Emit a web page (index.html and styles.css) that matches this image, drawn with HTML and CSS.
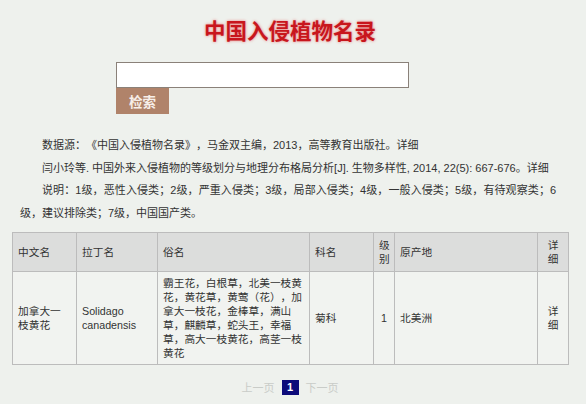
FILE: index.html
```html
<!DOCTYPE html>
<html lang="zh-CN">
<head>
    <meta charset="UTF-8">
    <meta name="viewport" content="width=device-width, initial-scale=1.0">
    <title>中国入侵植物名录</title>
    <link rel="stylesheet" href="styles.css">
</head>
<body>
    <div class="page">
        <h1 class="title">中国入侵植物名录</h1>
        <form class="search">
            <input type="text" class="search-input" name="q">
            <button type="button" class="search-btn">检索</button>
        </form>

        <div class="notes">
            <p>数据源：《中国入侵植物名录》，马金双主编，2013，高等教育出版社。详细</p>
            <p>闫小玲等. 中国外来入侵植物的等级划分与地理分布格局分析[J]. 生物多样性, 2014, 22(5): 667-676。详细</p>
            <p>说明：1级，恶性入侵类；2级，严重入侵类；3级，局部入侵类；4级，一般入侵类；5级，有待观察类；6级，建议排除类；7级，中国国产类。</p>
        </div>

        <table class="plants">
            <colgroup>
                <col style="width: 64px">
                <col style="width: 81px">
                <col style="width: 152px">
                <col style="width: 64px">
                <col style="width: 21px">
                <col style="width: 143px">
                <col style="width: 31px">
            </colgroup>
            <thead>
                <tr>
                    <th>中文名</th>
                    <th>拉丁名</th>
                    <th>俗名</th>
                    <th>科名</th>
                    <th class="center">级别</th>
                    <th>原产地</th>
                    <th class="center">详细</th>
                </tr>
            </thead>
            <tbody>
                <tr>
                    <td>加拿大一枝黄花</td>
                    <td>Solidago canadensis</td>
                    <td>霸王花，白根草，北美一枝黄花，黄花草，黄莺（花），加拿大一枝花，金棒草，满山草，麒麟草，蛇头王，幸福草，高大一枝黄花，高茎一枝黄花</td>
                    <td>菊科</td>
                    <td class="center">1</td>
                    <td>北美洲</td>
                    <td class="center">详细</td>
                </tr>
            </tbody>
        </table>

        <div class="pager">
            <span class="pager-link">上一页</span>
            <span class="pager-current">1</span>
            <span class="pager-link">下一页</span>
        </div>
    </div>
</body>
</html>
```

FILE: styles.css
```css
body {
    margin: 0;
    background-color: #eef1ed;
    font-family: 'Liberation Sans', 'Noto Sans CJK SC', sans-serif;
    color: #333;
    text-spacing-trim: space-all;
}
.page {
    padding: 0 18px 0 12px;
}
.title {
    margin: 18px 0 0;
    font-size: 21.5px;
    line-height: 28px;
    text-align: center;
    color: #c8161d;
    text-shadow: 0 0 3px rgba(230, 40, 40, 0.6);
}
.search {
    margin: 16px 0 0 104px;
    width: 293px;
}
.search-input {
    display: block;
    width: 293px;
    height: 26px;
    margin: 0;
    padding: 0 4px;
    box-sizing: border-box;
    border: 1px solid #8a8179;
    background: #fff;
    font-size: 12px;
}
.search-btn {
    display: block;
    width: 53px;
    height: 26px;
    margin: 0;
    padding: 0;
    border: none;
    background-color: #b0836a;
    color: #f7efe9;
    font-family: 'Noto Sans CJK SC', sans-serif;
    font-size: 13.5px;
    font-weight: bold;
    cursor: pointer;
}
.notes {
    margin: 20px 12px 0 8px;
    font-size: 11px;
    line-height: 22.5px;
    color: #333;
}
.notes p {
    margin: 0;
    text-indent: 22px;
    text-align: justify;
}
.plants {
    margin-top: 8px;
    width: 556px;
    table-layout: fixed;
    border-collapse: collapse;
    font-size: 10.7px;
    line-height: 14px;
    color: #333;
}
.plants th, .plants td {
    border: 1px solid #bcbcbc;
    padding: 4px 5px;
    text-align: left;
    vertical-align: middle;
    font-weight: normal;
}
.plants th {
    padding: 5px;
    background-color: #dcdddc;
}
.plants td {
    background-color: #f1f3f0;
}
.plants .center {
    text-align: center;
}
.pager {
    display: flex;
    justify-content: center;
    align-items: center;
    gap: 7px;
    margin-top: 14px;
    font-size: 11px;
}
.pager-link {
    color: #c9ccc8;
}
.pager-current {
    width: 17px;
    height: 15px;
    line-height: 15px;
    text-align: center;
    background-color: #0d0b7a;
    color: #fff;
    font-weight: bold;
}
```
